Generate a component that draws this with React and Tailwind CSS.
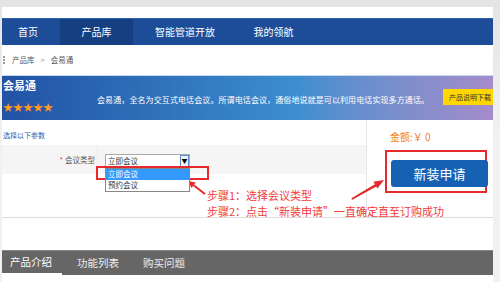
import React from 'react';

const NavItem = ({ label, width, active, className = '' }) => (
  <div
    className={`h-full flex items-center justify-center ${width} ${active ? 'bg-[#163f82]' : ''} ${className}`}
  >
    {label}
  </div>
);

const App = () => {
  return (
    <div className="relative w-[500px] h-[282px] overflow-hidden bg-gradient-to-b from-[#e4e4e4] via-[#f1f1f1] to-[#f1f1f1] font-['Noto_Sans_CJK_SC',sans-serif]">
      {/* page card */}
      <div className="ml-[2px] mt-[7px] w-[491px] bg-white">
        <div className="h-[11px]" />

        {/* top nav */}
        <div className="h-[27px] flex bg-[#1d4c98] text-white text-[10px] leading-none border-t border-[#2e5fae]">
          <NavItem label="首页" width="w-[58px]" className="!justify-start pl-[16px]" />
          <NavItem label="产品库" width="w-[73px]" active />
          <NavItem label="智能管道开放" width="w-[104px]" />
          <NavItem label="我的领航" width="w-[73px]" />
        </div>

        {/* breadcrumb */}
        <div className="h-[30px] flex items-center text-[7.5px] text-[#555] leading-none">
          <div className="ml-[1px] w-[2px] h-[8px] border-l-2 border-dotted border-[#999]" />
          <span className="ml-[7px]">产品库</span>
          <span className="ml-[6px] text-[#999]">&gt;</span>
          <span className="ml-[6px]">会易通</span>
        </div>

        {/* banner */}
        <div className="h-[45px] flex bg-gradient-to-r from-[#2252a4] via-[#3d8ed0] via-60% to-[#a48cc9] border-t border-[#c9d9ee]">
          <div className="w-[95px] pl-[1px] pt-[2px] flex flex-col">
            <span className="text-white text-[11px] font-bold leading-[14px]">会易通</span>
            <span className="mt-[10px] text-[#ff9a1e] text-[10px] leading-none">★★★★★</span>
          </div>
          <div className="flex-1 flex items-center pt-[3px] text-white text-[8px] leading-none tracking-[0.1px] whitespace-nowrap">
            会易通，全名为交互式电话会议。所谓电话会议，通俗地说就是可以利用电话实现多方通话。
          </div>
          <div className="mt-[13px] w-[50px] h-[16px] bg-[#ffd600] text-[#333] text-[7px] leading-[16px] pl-[6px] overflow-hidden whitespace-nowrap">
            产品说明下载
          </div>
        </div>

        {/* main form area */}
        <div className="h-[98px] flex border-b border-[#dcdcdc]">
          <div className="w-[364px] flex flex-col">
            <div className="pt-[11px] pl-[1px] text-[7px] leading-[8px] text-[#2e5fae]">选择以下参数</div>
            <div className="mt-[6px] h-[29px] flex items-center bg-[#f5f5f5]">
              <div className="w-[96px] h-full flex items-center justify-end border-r border-[#ececec] text-[7.5px] text-[#555] leading-none pr-[2px]">
                <span className="text-[#e33] mr-[2px]">*</span>
                会议类型
              </div>
              <div className="relative ml-[7px] mt-[2px] w-[85px] h-[14px] bg-white border border-[#aaa] flex items-center">
                <span className="pl-[2px] text-[7.5px] text-[#333] leading-none">立即会议</span>
                <div className="absolute right-0 top-0 w-[9px] h-[12px] border border-[#5b8fd0] bg-[#f0f4fa] flex items-center justify-center">
                  <span className="text-[6px] leading-none text-black">▼</span>
                </div>
                {/* open dropdown */}
                <div className="absolute left-[-1px] top-[13px] w-[85px] bg-white border border-[#888] z-10 text-[7.5px] leading-none">
                  <div className="h-[11px] flex items-center pl-[2px] bg-[#3399ff] text-white">立即会议</div>
                  <div className="h-[11px] flex items-center pl-[2px] text-[#333]">预约会议</div>
                </div>
              </div>
            </div>
          </div>
          <div className="flex-1 border-l border-[#e6e6e6] flex flex-col">
            <div className="pl-[23px] pt-[12px] text-[10px] leading-[10px] text-[#f27b2c]">金额:￥ 0</div>
            <div className="mt-[8px] ml-[18px] w-[102px] h-[43px] border-2 border-[#e42a2a] pt-[8px] pl-[4px]">
              <div className="w-[97px] h-[27px] rounded-[3px] bg-[#1661b3] flex items-center justify-center text-white text-[13px] leading-none">
                新装申请
              </div>
            </div>
          </div>
        </div>

        <div className="h-[32px]" />

        {/* bottom tabs */}
        <div className="h-[25px] flex bg-[#666] border-t border-[#888] text-white text-[10.5px] leading-none">
          <div className="w-[60px] h-full flex items-center pl-[8px] border-b-2 border-white">产品介绍</div>
          <div className="w-[66px] h-full flex items-center pl-[15px] text-[#eee]">功能列表</div>
          <div className="h-full flex items-center pl-[15px] text-[#eee]">购买问题</div>
        </div>
        <div className="h-[7px]" />
      </div>

      {/* annotation: red frame around highlighted option */}
      <div className="absolute left-[96px] top-[166px] w-[113px] h-[14px] border-2 border-[#e42a2a]" />

      {/* annotation text */}
      <div className="absolute left-[207px] top-[187px] text-[#f23b3b] text-[11px] leading-[16px] whitespace-nowrap">
        <div>步骤1：选择会议类型</div>
        <div>步骤2：点击“新装申请”一直确定直至订购成功</div>
      </div>

      {/* annotation arrows */}
      <svg className="absolute left-0 top-0" width="500" height="282" viewBox="0 0 500 282">
        <line x1="205" y1="194" x2="193.6" y2="185.2" stroke="#e42a2a" strokeWidth="2" />
        <polygon points="188,181 195.7,182.4 191.5,188" fill="#e42a2a" />
        <polygon points="351,200 353,198 376,184.5 376.5,186.5" fill="#e42a2a" />
        <line x1="352" y1="199" x2="375.4" y2="185.1" stroke="#e42a2a" strokeWidth="2" />
        <polygon points="384,180 377.4,188.5 373.4,181.7" fill="#e42a2a" />
      </svg>
    </div>
  );
};

export default App;
